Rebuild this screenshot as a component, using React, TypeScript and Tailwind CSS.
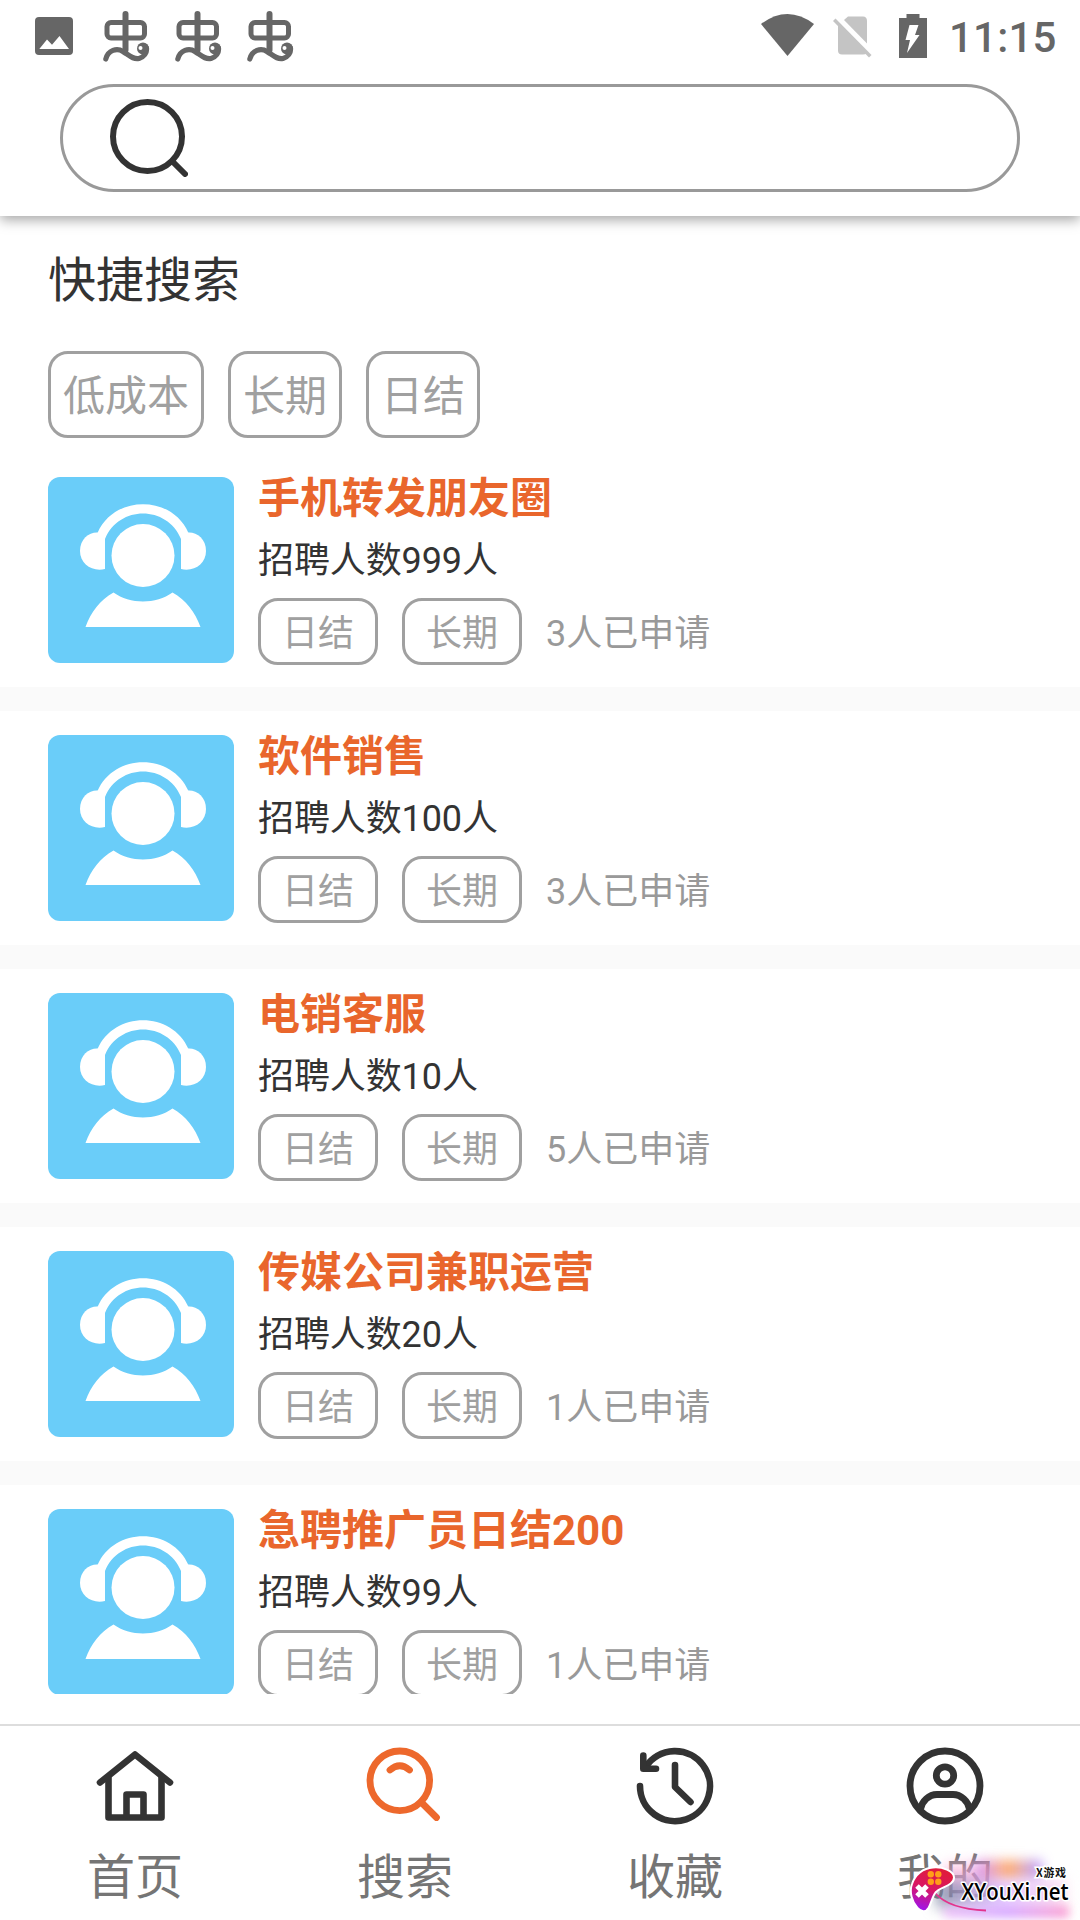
import type { ReactNode } from "react";

type Job = {
  title: string;
  people: number;
  applied: number;
};

const quickTags = ["低成本", "长期", "日结"];

const jobs: Job[] = [
  { title: "手机转发朋友圈", people: 999, applied: 3 },
  { title: "软件销售", people: 100, applied: 3 },
  { title: "电销客服", people: 10, applied: 5 },
  { title: "传媒公司兼职运营", people: 20, applied: 1 },
  { title: "急聘推广员日结200", people: 99, applied: 1 },
];

function BugIcon() {
  return (
    <svg className="w-12 h-[54px]" viewBox="0 0 48 54" fill="none" stroke="#666" strokeLinecap="round">
      <rect x="4" y="14.500" width="37.500" height="15.500" rx="4" strokeWidth="5" />
      <path d="M22.500 6v36" strokeWidth="6" />
      <path d="M2.800 51C5 42 14 39.500 20 43.500C27 48 30 51.500 36 50.500C41 49 44 45 43.500 40" strokeWidth="5.200" />
      <circle cx="40" cy="40.500" r="6" fill="#666" stroke="none" />
      <circle cx="37.500" cy="40" r="2" fill="#fff" stroke="none" />
    </svg>
  );
}

function StatusBar() {
  return (
    <div className="flex h-[72px] items-start justify-between">
      <div className="flex pl-[35px]">
        <svg className="w-[38px] h-[38px] mt-[17px] mr-[30px]" viewBox="0 0 38 38">
          <rect width="38" height="38" rx="4" fill="#666" />
          <path d="M4.300 32 12 22.500 17 27.700 24.500 19 34 32Z" fill="#fff" />
        </svg>
        <div className="flex gap-6 pt-2">
          <BugIcon />
          <BugIcon />
          <BugIcon />
        </div>
      </div>
      <div className="flex pr-6">
        <svg className="w-[166px] h-[72px]" viewBox="0 0 166 72">
          <path d="M0 24Q26.500 4 53 24L26.500 56Z" fill="#666" />
          <g fill="#c4c4c4">
            <path d="M83 20 87 16.500H102Q106 16.500 106 21V43.500Z" />
            <path d="M77 24.500 105.500 53Q104.500 54.500 102 54.500H81Q77 54.500 77 50.500Z" />
            <path d="m74.500 18.500-2.500 2.500L108 57.500l2.500-2.500Z" />
          </g>
          <path d="M138 18h7.500v-4h13v4h7.500v40h-28Z" fill="#666" />
          <path d="M148.500 25h9l-3.500 10h4.500L146 53l3-13h-4.500Z" fill="#fff" />
        </svg>
        <span className="ml-[22px] mt-[14px] w-[107px] text-[42px] leading-[48px] font-medium tracking-[0.2px] whitespace-nowrap text-[#666]">
          11:15
        </span>
      </div>
    </div>
  );
}

function Avatar() {
  return (
    <svg className="w-[186px] h-[186px] shrink-0 rounded-xl bg-[#6acdf9]" viewBox="0 0 186 186">
      <g fill="#fff">
        <path d="M49.500 56C66 17.500 124 17.500 140.500 56L133 62C119 28 71 28 57 62Z" />
        <path d="M57 60V92C44 95 32 87 32 74S42 54.500 50.500 55.500Z" />
        <path d="M133 60V92C146 95 158 87 158 74S148 54.500 139.500 55.500Z" />
        <circle cx="95" cy="78.500" r="31.500" />
        <path d="M37.500 150C43 135 52 123 65.500 115.500C82 127.500 108 127.500 124.500 115.500C138 123 147 135 152.500 150Z" />
      </g>
    </svg>
  );
}

function Tag({ children }: { children: ReactNode }) {
  return (
    <span className="flex h-[67px] w-[120px] items-center justify-center rounded-[20px] border-3 border-[#a0a0a0] pt-1 text-[36px] leading-none text-[#a0a0a0]">
      {children}
    </span>
  );
}

function JobRow({ job }: { job: Job }) {
  return (
    <div className="flex h-[234px] gap-6 bg-white px-12 pt-6">
      <Avatar />
      <div className="flex flex-col">
        <h2 className="h-[42px] text-[42px] leading-[43px] font-bold text-[#e9662c]">{job.title}</h2>
        <p className="mt-6 h-9 text-[36px] leading-9 tracking-[-0.1px] text-[#333]">招聘人数{job.people}人</p>
        <div className="mt-[19px] flex h-[67px] items-center gap-6">
          <Tag>日结</Tag>
          <Tag>长期</Tag>
          <span className="pt-1 text-[36px] leading-none text-[#999]">{job.applied}人已申请</span>
        </div>
      </div>
    </div>
  );
}

function HomeIcon() {
  return (
    <svg className="w-20 h-20" viewBox="0 0 80 80" fill="none" stroke="#333" strokeWidth="6.600" strokeLinecap="round" strokeLinejoin="round">
      <path d="M5 37.500 40 9.500 75 37.500" />
      <path d="M13.500 33V72.500H66.500V33" />
      <path d="M31.500 70V49.500H48.500V70" />
    </svg>
  );
}

function SearchIcon() {
  return (
    <svg className="w-20 h-20" viewBox="0 0 80 80" fill="none" stroke="#ed682c" strokeWidth="6.800" strokeLinecap="round">
      <circle cx="34.800" cy="35.800" r="29.800" />
      <path d="M56 57 71.500 72.500" />
      <path d="M25 25Q34.800 16.500 44.500 25" />
    </svg>
  );
}

function HistoryIcon() {
  return (
    <svg className="w-20 h-20" viewBox="0 0 80 80" fill="none" stroke="#333" strokeWidth="6.600" strokeLinecap="round" strokeLinejoin="round">
      <path d="M5 41A35 35 0 1 0 11 21.500" />
      <path d="M8.300 10.500V23.700H21" />
      <path d="M40 20V42L55.500 57" />
    </svg>
  );
}

function UserIcon() {
  return (
    <svg className="w-20 h-20" viewBox="0 0 80 80" fill="none" stroke="#333" strokeWidth="6.800">
      <circle cx="40" cy="41" r="35" />
      <circle cx="40" cy="30.500" r="8.700" />
      <path d="M15.500 64C17 56 24 49.500 32 49.500H48C56 49.500 63 56 64.500 64" />
    </svg>
  );
}

const navItems = [
  { label: "首页", icon: <HomeIcon /> },
  { label: "搜索", icon: <SearchIcon /> },
  { label: "收藏", icon: <HistoryIcon /> },
  { label: "我的", icon: <UserIcon /> },
];

function Watermark() {
  return (
    <div className="absolute right-0 bottom-0 h-[84px] w-[176px] overflow-hidden">
      <div className="absolute top-7 left-10 h-7 w-[52px] bg-pink-300/60 blur-[7px]" />
      <div className="absolute top-6 left-[72px] h-5 w-[66px] bg-linear-to-r from-purple-400/60 via-orange-400/70 to-violet-500/60 blur-[6px]" />
      <div className="absolute top-11 left-8 h-7 w-[130px] bg-linear-to-r from-slate-500/70 via-purple-300/80 to-pink-200/70 blur-[7px]" />
      <div className="absolute top-[70px] left-10 h-3 w-[125px] bg-linear-to-r from-fuchsia-300/60 via-purple-400/60 to-pink-400/60 blur-[5px]" />
      <svg className="absolute bottom-0 left-0 h-[68px] w-[176px]" viewBox="0 0 176 68">
        <defs>
          <linearGradient id="pad" x1="0.600" y1="0" x2="0.300" y2="1">
            <stop offset="0" stopColor="#e01c38" />
            <stop offset="0.500" stopColor="#d91764" />
            <stop offset="1" stopColor="#9e14ee" />
          </linearGradient>
        </defs>
        <path d="M31 41Q45 57 82 58.500" fill="none" stroke="#e3348d" strokeWidth="1.800" />
        <path
          d="M8 32C11 23 19 16 29 15.500C38 14.500 50 19 50 25.500C50 34 36 35 31.500 40.500C28 45 27 52 24.500 56C22 60.500 17 60 13.500 56C8 50 5 40 8 32Z"
          fill="url(#pad)"
          stroke="#fff"
          strokeWidth="2"
        />
        <path d="m13 34 10 10m0-10-10 10" stroke="#fff" strokeWidth="5" />
        <g fill="#ff9e19">
          <circle cx="26.800" cy="22.300" r="3.200" />
          <circle cx="34.300" cy="22.300" r="3.200" />
          <circle cx="26.800" cy="29.700" r="3.200" />
          <circle cx="34.300" cy="29.700" r="3.200" />
        </g>
        <text x="132" y="24.500" fontSize="11" fontWeight="700" fill="#111" stroke="#fff" strokeWidth="3" paintOrder="stroke" textLength="30" className="font-['Noto_Sans_CJK_SC',sans-serif]">
          X游戏
        </text>
        <text x="57.500" y="48" fontSize="23.500" fontWeight="600" fill="#000" stroke="#fff" strokeWidth="3" strokeLinejoin="round" paintOrder="stroke" textLength="107" lengthAdjust="spacingAndGlyphs" className="font-['Open_Sans',sans-serif]">
          XYouXi.net
        </text>
      </svg>
    </div>
  );
}

export default function App() {
  return (
    <div className="relative flex h-[1920px] w-[1080px] flex-col overflow-hidden bg-white font-[Roboto,'Noto_Sans_CJK_SC',sans-serif]">
      {/* Header */}
      <header className="relative z-10 h-[216px] shrink-0 bg-white shadow-[0_4px_12px_rgba(0,0,0,0.35)]">
        <StatusBar />
        <div className="mx-[60px] mt-3 h-[108px] rounded-full border-3 border-[#999] pt-[10px] pl-[45px]">
          <svg className="w-20 h-20" viewBox="0 0 80 80" fill="none" stroke="#333" strokeWidth="6" strokeLinecap="round">
            <circle cx="39.500" cy="39.500" r="34.500" />
            <path d="M65 65 77 77" />
          </svg>
        </div>
      </header>

      {/* Quick search */}
      <section className="h-[237px] shrink-0 px-12 pt-[41px]">
        <h1 className="h-12 text-[48px] leading-[48px] text-[#333]">快捷搜索</h1>
        <div className="mt-[46px] flex gap-6">
          {quickTags.map((t) => (
            <span
              key={t}
              className="flex h-[87px] items-center rounded-[20px] border-3 border-[#a0a0a0] px-3 pt-[5px] text-[42px] leading-none text-[#a0a0a0]"
            >
              {t}
            </span>
          ))}
        </div>
      </section>

      {/* Jobs */}
      <main className="flex h-[1241px] shrink-0 flex-col gap-6 overflow-hidden bg-[#fafafa]">
        {jobs.map((job) => (
          <div key={job.title} className="shrink-0">
            <JobRow job={job} />
          </div>
        ))}
      </main>

      {/* Tab bar */}
      <nav className="mt-[30px] grid h-[196px] shrink-0 grid-cols-4 border-t-2 border-[#ddd] bg-white">
        {navItems.map((item) => (
          <div key={item.label} className="flex flex-col items-center pt-[19px]">
            {item.icon}
            <span className="mt-[29px] text-[48px] leading-[48px] text-[#757575]">{item.label}</span>
          </div>
        ))}
      </nav>
      <Watermark />
    </div>
  );
}
